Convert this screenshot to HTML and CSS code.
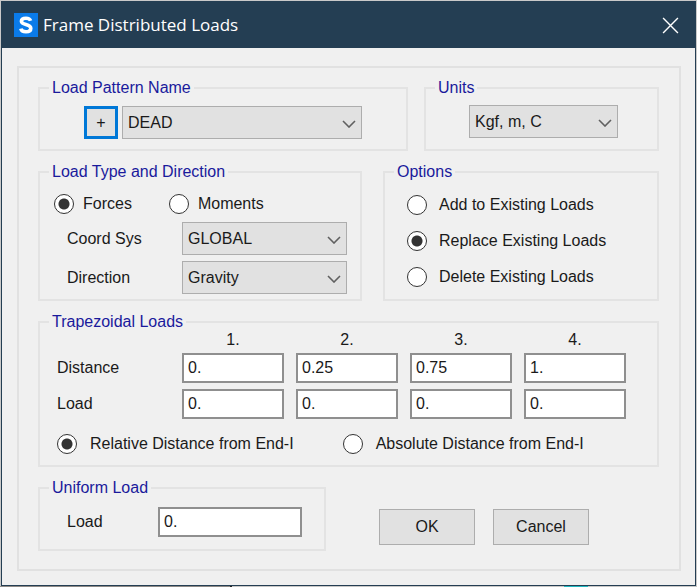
FILE: index.html
```html
<!DOCTYPE html>
<html lang="en">
<head>
<meta charset="utf-8">
<title>Frame Distributed Loads</title>
<link rel="stylesheet" href="styles.css">
</head>
<body>
<form class="window">
  <header class="titlebar">
    <svg class="logo" viewBox="0 0 24 24" aria-hidden="true">
      <rect width="24" height="24" fill="#0a7bea"/>
      <path d="M16.600 7.800C16 6 14.400 5.200 12 5.200C9.200 5.200 7.400 6.400 7.400 8.300C7.400 12.600 16.800 10.400 16.800 15.200C16.800 17.500 14.800 18.800 12 18.800C9.200 18.800 7.300 17.700 6.800 15.600" fill="none" stroke="#fff" stroke-width="3.600"/>
    </svg>
    <h1 class="title">Frame Distributed Loads</h1>
    <button class="close" type="button" aria-label="Close">
      <svg viewBox="0 0 16 16" aria-hidden="true"><path d="M1 1L15 15M15 1L1 15" stroke="#fff" stroke-width="1.300" fill="none"/></svg>
    </button>
  </header>
  <main class="client">
    <div class="panel">
      <div class="row row-pattern">
        <fieldset class="group">
          <legend>Load Pattern Name</legend>
          <div class="pattern">
            <button class="add" type="button" aria-label="Add load pattern">+</button>
            <div class="combo">
              <select aria-label="Load pattern"><option>DEAD</option></select>
              <svg class="chevron" viewBox="0 0 14 8" aria-hidden="true"><path d="M1 1L7 7L13 1"/></svg>
            </div>
          </div>
        </fieldset>
        <fieldset class="group">
          <legend>Units</legend>
          <div class="units">
            <div class="combo">
              <select aria-label="Units"><option>Kgf, m, C</option></select>
              <svg class="chevron" viewBox="0 0 14 8" aria-hidden="true"><path d="M1 1L7 7L13 1"/></svg>
            </div>
          </div>
        </fieldset>
      </div>

      <div class="row row-type">
        <fieldset class="group">
          <legend>Load Type and Direction</legend>
          <div class="kinds">
            <label class="radio"><input type="radio" name="kind" checked>Forces</label>
            <label class="radio"><input type="radio" name="kind">Moments</label>
          </div>
          <div class="fields">
            <label for="coord">Coord Sys</label>
            <div class="combo">
              <select id="coord"><option>GLOBAL</option></select>
              <svg class="chevron" viewBox="0 0 14 8" aria-hidden="true"><path d="M1 1L7 7L13 1"/></svg>
            </div>
            <label for="direction">Direction</label>
            <div class="combo">
              <select id="direction"><option>Gravity</option></select>
              <svg class="chevron" viewBox="0 0 14 8" aria-hidden="true"><path d="M1 1L7 7L13 1"/></svg>
            </div>
          </div>
        </fieldset>
        <fieldset class="group">
          <legend>Options</legend>
          <div class="options">
            <label class="radio"><input type="radio" name="mode">Add to Existing Loads</label>
            <label class="radio"><input type="radio" name="mode" checked>Replace Existing Loads</label>
            <label class="radio"><input type="radio" name="mode">Delete Existing Loads</label>
          </div>
        </fieldset>
      </div>

      <fieldset class="group">
        <legend>Trapezoidal Loads</legend>
        <table class="loads">
          <thead>
            <tr><td></td><th scope="col">1.</th><th scope="col">2.</th><th scope="col">3.</th><th scope="col">4.</th></tr>
          </thead>
          <tbody>
            <tr>
              <th scope="row">Distance</th>
              <td><input type="text" value="0." aria-label="Distance 1"></td>
              <td><input type="text" value="0.25" aria-label="Distance 2"></td>
              <td><input type="text" value="0.75" aria-label="Distance 3"></td>
              <td><input type="text" value="1." aria-label="Distance 4"></td>
            </tr>
            <tr>
              <th scope="row">Load</th>
              <td><input type="text" value="0." aria-label="Load 1"></td>
              <td><input type="text" value="0." aria-label="Load 2"></td>
              <td><input type="text" value="0." aria-label="Load 3"></td>
              <td><input type="text" value="0." aria-label="Load 4"></td>
            </tr>
          </tbody>
        </table>
        <div class="measure">
          <label class="radio"><input type="radio" name="measure" checked>Relative Distance from End-I</label>
          <label class="radio"><input type="radio" name="measure">Absolute Distance from End-I</label>
        </div>
      </fieldset>

      <div class="row row-uniform">
        <fieldset class="group">
          <legend>Uniform Load</legend>
          <div class="uniform">
            <label for="uniform">Load</label>
            <input type="text" id="uniform" value="0.">
          </div>
        </fieldset>
        <div class="actions">
          <button class="action" type="submit">OK</button>
          <button class="action" type="button">Cancel</button>
        </div>
      </div>
    </div>
  </main>
</form>
</body>
</html>
```
FILE: styles.css
```css
* { box-sizing: border-box; }

html { height: 100%; }

body {
  min-height: 100%;
  margin: 0;
  padding: 1px;
  background: linear-gradient(90deg, #8e8a86 0 230px, #222 230px 232px, #c9c8c6 232px 564px, #22b8c0 564px 588px, #c9c8c6 588px) bottom / 100% 1px no-repeat #c9c9c9;
  color: #1a1a1a;
  font: 16px/18px "Liberation Sans", Arial, sans-serif;
}

.window {
  border: 1px solid #243e53;
  background: #f0f0f0;
}

.titlebar {
  display: flex;
  align-items: center;
  height: 46px;
  padding: 0 16px 0 12px;
  background: #243e53;
}

.logo { width: 24px; height: 24px; }

.title {
  flex: 1;
  margin: 0 0 0 5px;
  color: #fff;
  font: 17px/24px "Open Sans", "Noto Sans", sans-serif;
}

.close {
  display: flex;
  padding: 0;
  border: 0;
  background: none;
}

.close svg { width: 17px; height: 17px; }

.client { padding: 18px 14px 14px 15px; }

.panel {
  display: flex;
  flex-direction: column;
  gap: 12px;
  padding: 11px 20px 18px 19px;
  border: 2px solid #e1e1e1;
}

.row { display: grid; }
.row-pattern { grid-template-columns: 370fr 235fr; gap: 16px; }
.row-type { grid-template-columns: 324fr 276fr; gap: 21px; }
.row-uniform { grid-template-columns: 288fr 280fr; gap: 53px; }

.group {
  min-width: 0;
  margin: 0;
  padding: 0;
  border: 2px solid #e3e3e3;
}

legend {
  margin-left: 9px;
  padding: 0 3px;
  color: #1a1a9c;
}

.pattern {
  display: flex;
  gap: 4px;
  padding: 9px 44px 10px;
}

.pattern .combo { flex: 1; }

.units { padding: 8px 39px 11px 43px; }

.add {
  width: 34px;
  height: 33px;
  padding: 0;
  border: 3px solid #0078d7;
  background: #e1e1e1;
  color: #1a1a1a;
  font: inherit;
}

.combo { position: relative; }

.combo select {
  display: block;
  width: 100%;
  height: 33px;
  padding: 0 28px 0 5px;
  appearance: none;
  border: 1px solid #adadad;
  border-radius: 0;
  background: #e1e1e1;
  color: inherit;
  font: inherit;
}

.chevron {
  position: absolute;
  top: 14px;
  right: 6px;
  width: 14px;
  height: 8px;
  fill: none;
  stroke: #606060;
  stroke-width: 1.600;
  pointer-events: none;
}

.radio {
  display: flex;
  align-items: center;
  gap: 12px;
}

.radio input {
  flex: none;
  width: 20px;
  height: 20px;
  margin: 0;
  appearance: none;
  border: 1px solid #333;
  border-radius: 50%;
  background: #fff;
}

.radio input:checked { background: radial-gradient(circle, #333 5px, #fff 6px); }

.kinds {
  display: flex;
  gap: 37px;
  padding: 13px 14px 8px;
}

.kinds .radio { gap: 9px; }

.fields {
  display: grid;
  grid-template-columns: 115fr 165fr;
  align-items: center;
  row-gap: 6px;
  padding: 0 13px 3px 27px;
}

.options {
  display: grid;
  gap: 16px;
  padding: 14px 22px 12px;
}

.loads {
  width: 100%;
  padding-right: 25px;
  table-layout: fixed;
  border-spacing: 0;
}

.loads td, .loads th {
  padding: 0 6px 6px;
  font-weight: normal;
}

.loads thead th, .loads thead td { padding: 0 6px 4px; }
.loads tr > :first-child { width: 136px; }
.loads tbody th { padding-left: 17px; text-align: left; }

input[type="text"] {
  display: block;
  width: 100%;
  height: 30px;
  padding: 0 4px;
  border: 2px solid #8f8f8f;
  border-radius: 0;
  background: #fff;
  color: inherit;
  font: inherit;
}

.measure {
  display: flex;
  gap: 49px;
  padding: 9px 17px 11px;
}

.measure .radio { gap: 13px; }

.uniform {
  display: grid;
  grid-template-columns: 91fr 144fr;
  align-items: center;
  padding: 10px 22px 12px 27px;
}

.actions {
  display: flex;
  align-items: flex-start;
  gap: 18px;
  padding-top: 30px;
}

.action {
  width: 96px;
  height: 36px;
  border: 1px solid #adadad;
  background: #e1e1e1;
  color: #1a1a1a;
  font: inherit;
}
```
